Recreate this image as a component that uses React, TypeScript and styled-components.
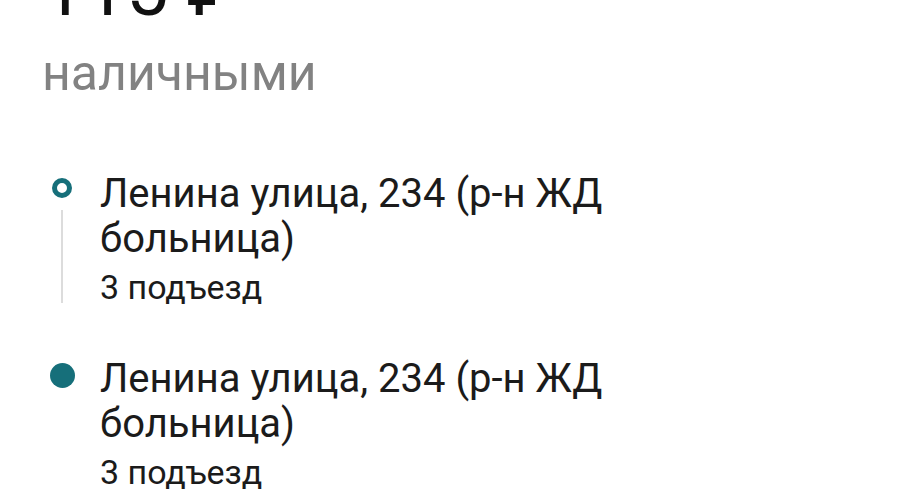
import React from 'react';
import styled, { createGlobalStyle } from 'styled-components';

const GlobalStyle = createGlobalStyle`
	html, body {
		margin: 0;
		padding: 0;
		background: #fff;
		overflow: hidden;
	}
	body {
		font-family: Roboto, 'Noto Sans', sans-serif;
		color: #1b1b1b;
	}
`

interface Stop {
	address: string,
	detail: string,
	kind: 'start' | 'end',
}

const stops: Stop[] = [
	{ address: 'Ленина улица, 234 (р-н ЖД больница)', detail: '3 подъезд', kind: 'start' },
	{ address: 'Ленина улица, 234 (р-н ЖД больница)', detail: '3 подъезд', kind: 'end' },
];

const StopRow = ({ stop, last }: { stop: Stop, last: boolean }) => (
	<Row last={last}>
		<Marker>
			<Dot kind={stop.kind}/>
			{!last && <Connector/>}
		</Marker>
		<div>
			<Address>{stop.address}</Address>
			<Detail>{stop.detail}</Detail>
		</div>
	</Row>
)

export default function App() {
	return (
		<Page>
			<GlobalStyle/>
			<Price>115 ₽</Price>
			<PayMethod>наличными</PayMethod>
			<Route>
				{stops.map((stop, i) => (
					<StopRow key={i} stop={stop} last={i === stops.length - 1}/>
				))}
			</Route>
		</Page>
	)
}

const Page = styled.div`
	width: 900px;
	height: 500px;
	padding-left: 42px;
	box-sizing: border-box;
	overflow: hidden;
`

const Price = styled.div`
	font-size: 75px;
	line-height: 75px;
	margin-top: -48px;
	color: #111;
`

const PayMethod = styled.div`
	font-size: 50px;
	line-height: 60px;
	margin-top: 16px;
	color: #828282;
`

const Route = styled.div`
	margin-top: 68px;
	display: flex;
	flex-direction: column;
	width: 620px;
`

const Row = styled.div<{ last: boolean }>`
	display: grid;
	grid-template-columns: 40px 1fr;
	column-gap: 18px;
	padding-bottom: ${({ last }) => last ? '0' : '49px'};
`

const Marker = styled.div`
	display: flex;
	flex-direction: column;
	align-items: center;
`

const Dot = styled.div<{ kind: 'start' | 'end' }>`
	box-sizing: border-box;
	border-radius: 50%;
	width: ${({ kind }) => kind === 'start' ? '20px' : '25px'};
	height: ${({ kind }) => kind === 'start' ? '20px' : '25px'};
	margin-top: 7px;
	background: ${({ kind }) => kind === 'start' ? '#fff' : '#166f7a'};
	border: ${({ kind }) => kind === 'start' ? '5px solid #166f7a' : 'none'};
`

const Connector = styled.div`
	flex: 1;
	width: 2px;
	margin: 12px 0 4px;
	background: #dcdcdc;
`

const Address = styled.div`
	font-size: 40px;
	line-height: 45px;
`

const Detail = styled.div`
	font-size: 34px;
	line-height: 40px;
	margin-top: 6px;
`
